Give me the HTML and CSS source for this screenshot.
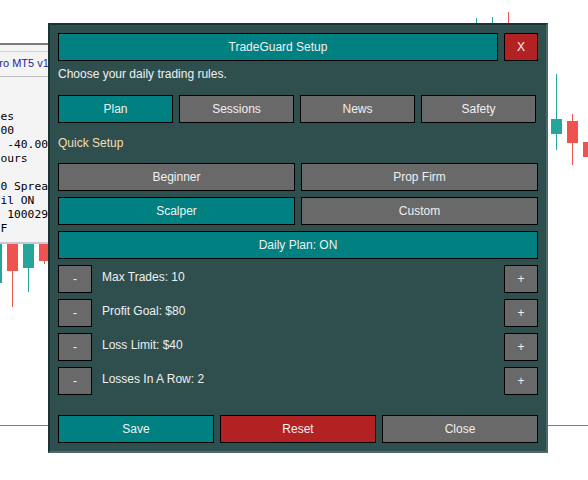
FILE: index.html
```html
<!DOCTYPE html>
<html lang="en">
<head>
  <meta charset="UTF-8">
  <meta name="viewport" content="width=device-width, initial-scale=1.0">
  <title>TradeGuard Setup</title>
  <link rel="stylesheet" href="styles.css">
</head>
<body>
  <!-- chart behind the dialog -->
  <div class="chart">
    <svg class="candles" width="588" height="480" viewBox="0 0 588 480">
      <line class="level" x1="0" y1="425.5" x2="588" y2="425.5"/>
      <g class="bull">
        <line x1="476.5" y1="18" x2="476.5" y2="40"/>
        <line x1="492.5" y1="17" x2="492.5" y2="40"/>
        <line x1="556.5" y1="74" x2="556.5" y2="150"/>
        <rect x="551" y="119" width="11" height="15"/>
        <rect x="-9" y="180" width="11" height="103"/>
        <line x1="28.5" y1="180" x2="28.5" y2="292"/>
        <rect x="23" y="180" width="11" height="88"/>
      </g>
      <g class="bear">
        <line x1="508.5" y1="12" x2="508.5" y2="40"/>
        <line x1="572.5" y1="114" x2="572.5" y2="165"/>
        <rect x="567" y="121" width="11" height="22"/>
        <rect x="583" y="142" width="11" height="15"/>
        <line x1="12.5" y1="180" x2="12.5" y2="307"/>
        <rect x="7" y="180" width="11" height="91"/>
        <line x1="44.5" y1="180" x2="44.5" y2="264"/>
        <rect x="39" y="180" width="11" height="81"/>
      </g>
    </svg>

    <div class="info">
      <div class="info-title">TradeGuard Pro MT5 v1.0</div>
<pre class="info-lines">Today
Plan
Max Trades
Bal: 10000
Max Loss -40.00
Market hours

Lot: 0.10 Spread 2.0
Stop Trail ON
Account: 100029
News: OFF</pre>
    </div>
  </div>

  <div class="panel">
    <div class="header">
      <button class="btn teal title">TradeGuard Setup</button>
      <button class="btn red close">X</button>
    </div>

    <p class="intro">Choose your daily trading rules.</p>

    <div class="tabs">
      <button class="btn teal">Plan</button>
      <button class="btn gray">Sessions</button>
      <button class="btn gray">News</button>
      <button class="btn gray">Safety</button>
    </div>

    <p class="section">Quick Setup</p>

    <div class="presets">
      <button class="btn gray">Beginner</button>
      <button class="btn gray">Prop Firm</button>
      <button class="btn teal">Scalper</button>
      <button class="btn gray">Custom</button>
    </div>

    <button class="btn teal daily">Daily Plan: ON</button>

    <div class="stepper">
      <button class="btn gray step">-</button>
      <span class="step-label">Max Trades: 10</span>
      <button class="btn gray step">+</button>
    </div>
    <div class="stepper">
      <button class="btn gray step">-</button>
      <span class="step-label">Profit Goal: $80</span>
      <button class="btn gray step">+</button>
    </div>
    <div class="stepper">
      <button class="btn gray step">-</button>
      <span class="step-label">Loss Limit: $40</span>
      <button class="btn gray step">+</button>
    </div>
    <div class="stepper">
      <button class="btn gray step">-</button>
      <span class="step-label">Losses In A Row: 2</span>
      <button class="btn gray step">+</button>
    </div>

    <div class="actions">
      <button class="btn teal">Save</button>
      <button class="btn red">Reset</button>
      <button class="btn gray">Close</button>
    </div>
  </div>
</body>
</html>
```

FILE: styles.css
```css
* {
  box-sizing: border-box;
}

body {
  margin: 0;
  width: 588px;
  height: 480px;
  overflow: hidden;
  position: relative;
  background: #ffffff;
  font-family: "Liberation Sans", Arial, sans-serif;
  font-size: 12px;
}

/* chart */
.chart {
  position: absolute;
  top: 0;
  left: 0;
  width: 588px;
  height: 480px;
}

.candles {
  display: block;
  shape-rendering: crispEdges;
}

.level {
  stroke: #2f9e8f;
  stroke-width: 1;
}

.bull line {
  stroke: #26a69a;
}

.bull rect {
  fill: #26a69a;
}

.bear line {
  stroke: #ef5350;
}

.bear rect {
  fill: #ef5350;
}

/* info box, mostly hidden under the dialog */
.info {
  position: absolute;
  left: -54px;
  top: 43px;
  width: 102px;
  height: 201px;
  overflow: hidden;
  background: #f4f4f4;
  border-top: 2px solid #7d7d7d;
  border-bottom: 2px solid #c9c9d1;
}

.info-title {
  margin: 6px 0 0 -16px;
  padding-bottom: 2px;
  height: 26px;
  font-size: 11px;
  line-height: 22px;
  color: #1f1f99;
  white-space: nowrap;
  border-top: 1px solid #d2d2d2;
  border-bottom: 1px solid #c0c0c0;
}

.info-lines {
  margin: 0;
  padding-top: 5px;
  font-family: "DejaVu Sans Mono", monospace;
  font-size: 11.3px;
  line-height: 14px;
  color: #000000;
}

/* dialog */
.panel {
  position: absolute;
  left: 48px;
  top: 23px;
  width: 500px;
  height: 430px;
  padding: 8px;
  display: flex;
  flex-direction: column;
  background: #2f4f4f;
  border: 2px solid;
  border-color: #1b3333 #4b6b6b #4b6b6b #1b3333;
  color: #f0f0f0;
}

.btn {
  height: 28px;
  padding: 0;
  border: 1px solid #000000;
  font-family: inherit;
  font-size: 12px;
  color: #f0f0f0;
}

.teal {
  background: #008080;
}

.gray {
  background: #696969;
}

.red {
  background: #b22222;
}

.header {
  display: flex;
  gap: 6px;
}

.title {
  flex: 1;
}

.close {
  width: 34px;
}

.intro {
  margin: 6px 0 14px;
  line-height: 14px;
}

.tabs {
  display: grid;
  grid-template-columns: repeat(4, 115px);
  gap: 6px;
}

.section {
  margin: 13px 0;
  line-height: 14px;
  color: #f5deb3;
}

.presets {
  display: grid;
  grid-template-columns: 1fr 1fr;
  gap: 6px;
}

.daily {
  margin-top: 6px;
}

.stepper {
  display: flex;
  margin-top: 6px;
}

.step {
  width: 34px;
}

.step-label {
  flex: 1;
  margin-left: 10px;
  padding-top: 5px;
  line-height: 14px;
}

.actions {
  display: grid;
  grid-template-columns: repeat(3, 1fr);
  gap: 6px;
  margin-top: 20px;
}
```
